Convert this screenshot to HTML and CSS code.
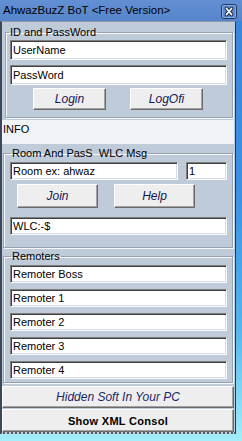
FILE: index.html
```html
<!DOCTYPE html>
<html>
<head>
<meta charset="utf-8">
<link rel="stylesheet" href="styles.css">
</head>
<body>
<div class="screen">
  <div class="titlebar">
    <span class="title">AhwazBuzZ BoT &lt;Free Version&gt;</span>
    <span class="close">
      <svg width="16" height="15" viewBox="0 0 16 15">
        <rect x="0.5" y="0.5" width="15" height="14" rx="2" fill="#5b8ad0" stroke="#22375c"/>
        <rect x="1.5" y="1.5" width="13" height="12" rx="1" fill="none" stroke="#9dbbe6" stroke-opacity="0.7"/>
        <path d="M5.5 4.5 L10.5 10.5 M10.5 4.5 L5.5 10.5" stroke="#1d2b47" stroke-width="3.6" stroke-linecap="round"/>
        <path d="M5.5 4.5 L10.5 10.5 M10.5 4.5 L5.5 10.5" stroke="#ffffff" stroke-width="1.8" stroke-linecap="round"/>
      </svg>
    </span>
  </div>
  <div class="window">
    <fieldset class="group g1">
      <legend>ID and PassWord</legend>
      <div class="tb tall">UserName</div>
      <div class="tb tall">PassWord</div>
      <div class="btnrow r1">
        <div class="btn b-login">Login</div>
        <div class="btn b-logoff">LogOfi</div>
      </div>
    </fieldset>
    <div class="info">INFO</div>
    <fieldset class="group g2">
      <legend>Room And PasS&nbsp; WLC Msg</legend>
      <div class="roomrow">
        <div class="tb room">Room ex: ahwaz</div>
        <div class="tb num">1</div>
      </div>
      <div class="btnrow r2">
        <div class="btn b-join">Join</div>
        <div class="btn b-help">Help</div>
      </div>
      <div class="tb">WLC:-$</div>
    </fieldset>
    <fieldset class="group g3">
      <legend>Remoters</legend>
      <div class="tb">Remoter Boss</div>
      <div class="tb">Remoter 1</div>
      <div class="tb">Remoter 2</div>
      <div class="tb">Remoter 3</div>
      <div class="tb">Remoter 4</div>
    </fieldset>
    <div class="wide hidden">Hidden Soft In Your PC</div>
    <div class="wide xml">Show XML Consol</div>
  </div>
</div>
</body>
</html>
```

FILE: styles.css
```css
* { box-sizing: border-box; }
html, body { margin: 0; padding: 0; }
body {
  width: 242px;
  height: 441px;
  overflow: hidden;
  font-family: "Liberation Sans", Arial, sans-serif;
  background: linear-gradient(to bottom, #3a84da 0%, #3b92e6 45%, #55b6ee 75%, #a2eef9 100%);
}
.screen {
  width: 242px;
  height: 441px;
}
.titlebar {
  height: 21px;
  background: linear-gradient(to bottom, #6390d3, #5685cb);
  display: flex;
  align-items: flex-start;
  justify-content: space-between;
  padding: 0 5px 0 3px;
}
.title {
  font-size: 11.5px;
  line-height: 21px;
  color: #000;
  white-space: nowrap;
}
.close {
  margin-top: 4px;
  width: 16px;
  height: 15px;
  display: block;
}
.close svg { display: block; }

.window {
  width: 236px;
  background: #c0cbd9;
  border-left: 2px solid #3b485a;
  border-right: 1px solid #2b3545;
  border-top: 1px solid #8d9aac;
  border-bottom: 2px dotted #5a5f66;
  display: flex;
  flex-direction: column;
}

.group {
  margin: 0;
  border: 1px solid #97a2b0;
  box-shadow: inset 1px 1px 0 #f6f8fb, 1px 1px 0 #f6f8fb;
  min-width: 0;
  display: flex;
  flex-direction: column;
}
.group legend {
  font-size: 11px;
  line-height: 14px;
  padding: 0 1px;
  color: #000;
}
.g1 {
  margin: 3px 2px 0 3px;
  padding: 1px 5px 7px 4px;
  gap: 5px;
}
.g1 legend { margin-left: -1px; }
.g2 {
  margin: 2px 2px 0 1px;
  padding: 2px 5px 12px 6px;
}
.g2 legend { margin-left: 1px; }
.g3 {
  margin: 1px 2px 0 1px;
  padding: 2px 5px 3px 6px;
  gap: 6px;
}
.g3 legend { margin-left: 1px; }

.tb {
  height: 18px;
  background: #fff;
  border-top: 1px solid #7f7f7f;
  border-left: 1px solid #7f7f7f;
  border-bottom: 1px solid #fbfcfd;
  border-right: 1px solid #fbfcfd;
  box-shadow: inset 1px 1px 0 #3f3f3f, inset -1px -1px 0 #d8dce2;
  font-size: 11px;
  line-height: 16px;
  padding-left: 2px;
  color: #000;
  white-space: nowrap;
  overflow: hidden;
}
.tb.tall {
  height: 20px;
  line-height: 18px;
}

.btnrow {
  display: flex;
}
.r1 {
  margin-top: -2px;
  padding-left: 23px;
  gap: 24px;
}
.r1 .btn { width: 73px; height: 22px; }
.r2 {
  margin-top: 4px;
  margin-bottom: 9px;
  padding-left: 7px;
  gap: 16px;
}
.r2 .btn { width: 81px; height: 24px; }

.btn, .wide {
  background: #eeeeee;
  border-top: 1px solid #ffffff;
  border-left: 1px solid #ffffff;
  border-bottom: 1px solid #6a6a6a;
  border-right: 1px solid #6a6a6a;
  box-shadow: inset -1px -1px 0 #a3a3a3;
  display: flex;
  align-items: center;
  justify-content: center;
  white-space: nowrap;
}
.btn {
  font-size: 12px;
  font-style: italic;
  color: #15165a;
}

.roomrow {
  display: flex;
  gap: 8px;
}
.room { width: 168px; }
.num { flex: 1; }

.info {
  margin: 2px 1px 0 0;
  height: 24px;
  background: #f0f4f9;
  font-size: 11px;
  line-height: 14px;
  padding: 2px 0 0 1px;
  color: #000;
}

.wide {
  margin-right: 1px;
}
.hidden {
  margin-top: 3px;
  height: 22px;
  font-size: 12px;
  font-style: italic;
  color: #1b2767;
}
.xml {
  margin-top: 1px;
  height: 23px;
  font-size: 11px;
  font-weight: bold;
  letter-spacing: 0.3px;
  color: #000;
}
```
